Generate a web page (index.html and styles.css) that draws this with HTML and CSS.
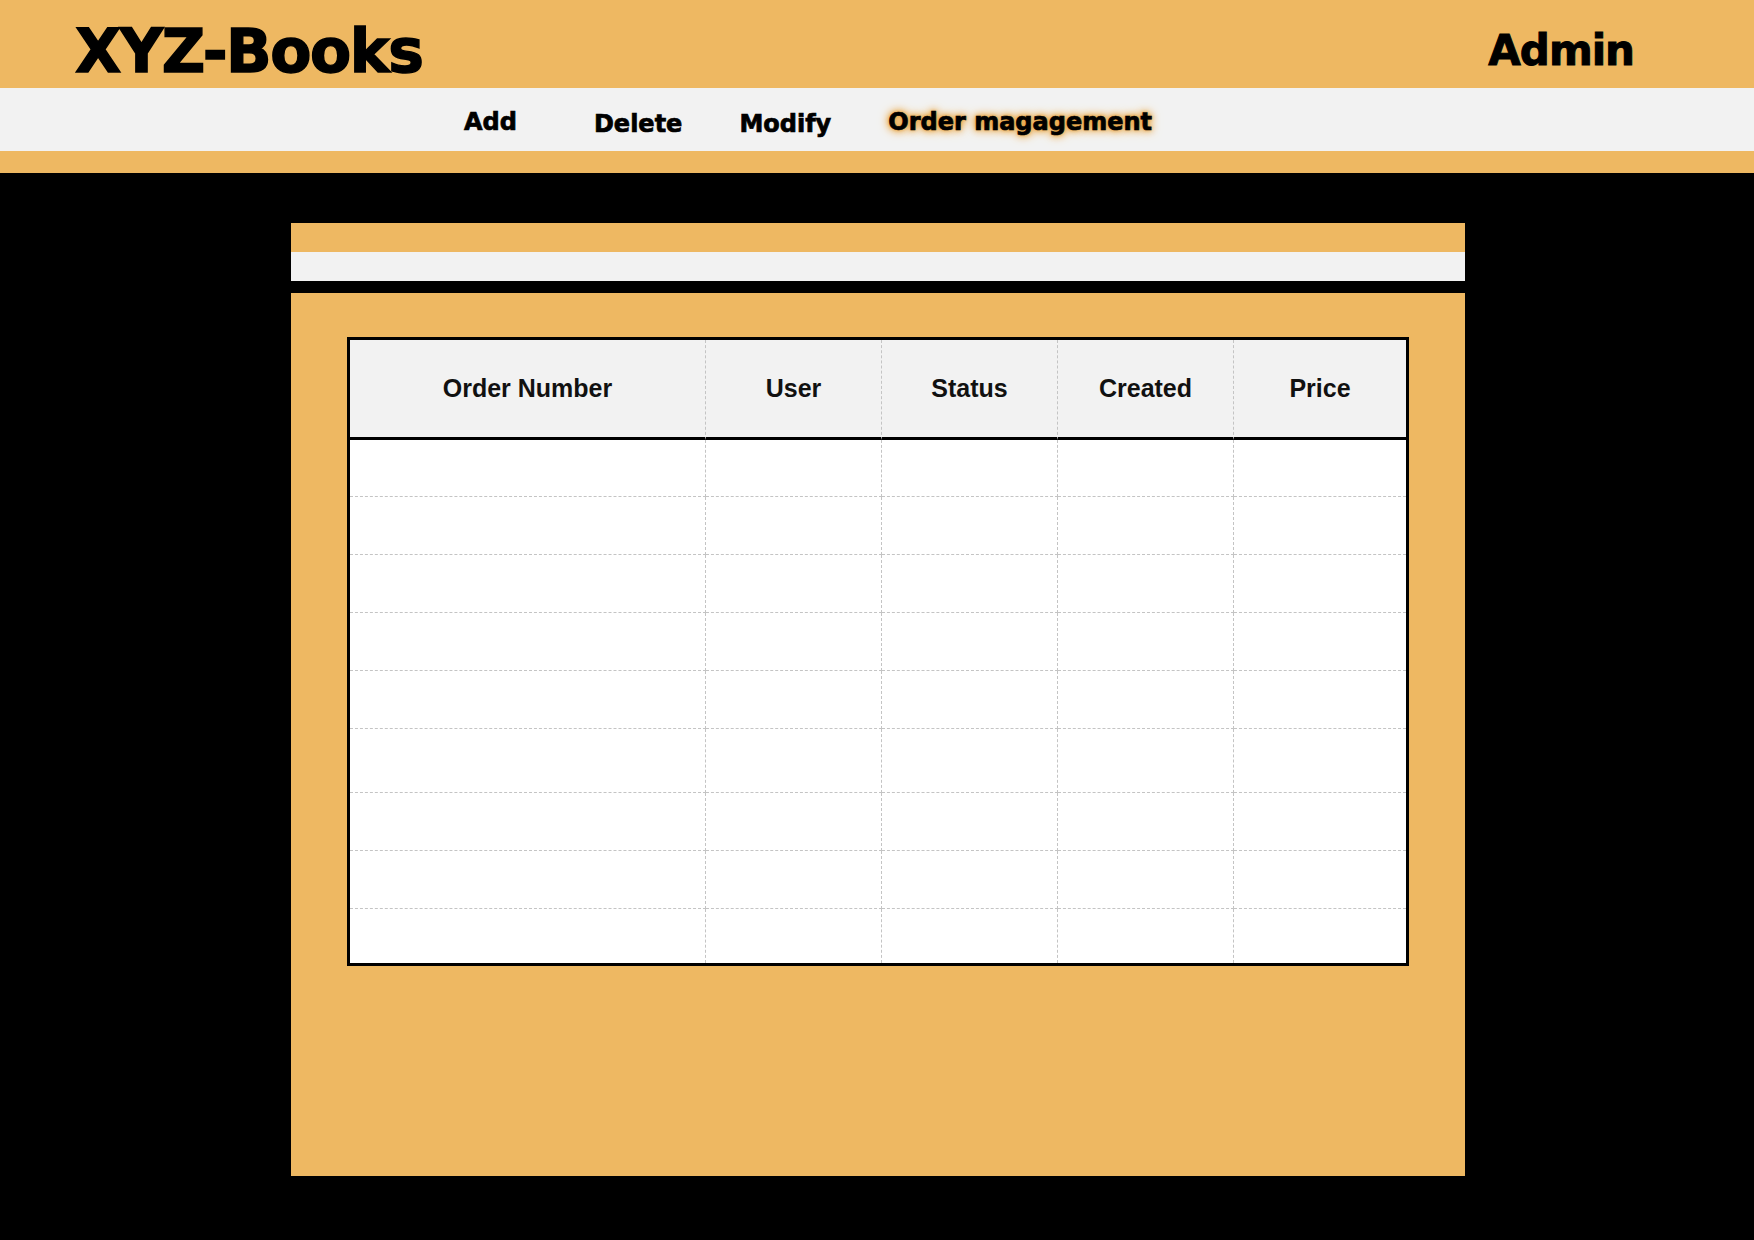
FILE: index.html
```html
<!DOCTYPE html>
<html lang="en">
<head>
<meta charset="utf-8">
<title>XYZ-Books Admin</title>
<link rel="stylesheet" href="styles.css">
</head>
<body>
<header class="topbar">
  <div class="brand-row">
    <h1 class="logo">XYZ-Books</h1>
    <div class="user">Admin</div>
  </div>
  <nav class="nav">
    <a class="nav-item nav-add" href="#">Add</a>
    <a class="nav-item nav-low" href="#">Delete</a>
    <a class="nav-item nav-low" href="#">Modify</a>
    <a class="nav-item nav-active" href="#">Order magagement</a>
  </nav>
  <div class="topbar-foot"></div>
</header>
<main class="main">
  <div class="strip strip-orange"></div>
  <div class="strip strip-gray"></div>
  <section class="panel">
    <table class="orders">
      <colgroup>
        <col class="c-num">
        <col class="c-mid">
        <col class="c-mid">
        <col class="c-mid">
        <col class="c-last">
      </colgroup>
      <thead>
        <tr><th>Order Number</th><th>User</th><th>Status</th><th>Created</th><th>Price</th></tr>
      </thead>
      <tbody>
        <tr class="row-first"><td></td><td></td><td></td><td></td><td></td></tr>
        <tr><td></td><td></td><td></td><td></td><td></td></tr>
        <tr><td></td><td></td><td></td><td></td><td></td></tr>
        <tr><td></td><td></td><td></td><td></td><td></td></tr>
        <tr><td></td><td></td><td></td><td></td><td></td></tr>
        <tr class="row-tall"><td></td><td></td><td></td><td></td><td></td></tr>
        <tr><td></td><td></td><td></td><td></td><td></td></tr>
        <tr><td></td><td></td><td></td><td></td><td></td></tr>
        <tr class="row-last"><td></td><td></td><td></td><td></td><td></td></tr>
      </tbody>
    </table>
  </section>
</main>
</body>
</html>
```
FILE: styles.css
```css
* { box-sizing: border-box; }

html, body {
  margin: 0;
  padding: 0;
}

body {
  background: #000;
  width: 1754px;
  height: 1240px;
  overflow: hidden;
  font-family: "DejaVu Sans", "Liberation Sans", sans-serif;
}

.brand-row {
  height: 88px;
  background: #eeb862;
  display: flex;
  justify-content: space-between;
  align-items: flex-start;
  padding: 0 120px 0 75px;
}

.logo {
  margin: 21px 0 0;
  font: 700 60px/60px "DejaVu Sans", sans-serif;
  letter-spacing: -1.5px;
  color: #000;
  -webkit-text-stroke: 1.4px #000;
}

.user {
  margin-top: 30px;
  font: 700 42px/42px "DejaVu Sans", sans-serif;
  letter-spacing: -1px;
  color: #000;
  -webkit-text-stroke: 1px #000;
}

.nav {
  height: 63px;
  background: #f2f2f2;
  display: flex;
  align-items: flex-start;
  gap: 57px;
  padding: 22px 0 0 464px;
}

.nav-item {
  font: 700 24px/24px "DejaVu Sans", sans-serif;
  color: #000;
  text-decoration: none;
  -webkit-text-stroke: 0.7px #000;
}

.nav-add { margin-right: 20px; }
.nav-low { padding-top: 2px; }

.nav-active {
  text-shadow: 0 0 3px #e39a35, 0 0 6px #e8a545, 0 0 9px #eeb258, 0 0 12px #f2bd6c;
}

.topbar-foot {
  height: 22px;
  background: #eeb862;
}

.main {
  width: 1174px;
  margin: 50px 0 0 291px;
}

.strip { height: 29px; }
.strip-orange { background: #eeb862; }
.strip-gray { background: #f2f2f2; }

.panel {
  margin-top: 12px;
  height: 883px;
  background: #eeb862;
  padding: 44px 56px;
}

.orders {
  width: 1062px;
  table-layout: fixed;
  border-collapse: separate;
  border-spacing: 0;
  border: 3px solid #000;
  background: #fff;
}

.c-num { width: 356px; }
.c-mid { width: 176px; }
.c-last { width: 172px; }

.orders th {
  height: 100px;
  padding: 0;
  background: #f2f2f2;
  border-bottom: 3px solid #000;
  border-right: 1px dashed #c4c4c4;
  font: 700 25px "Liberation Sans", Arial, sans-serif;
  color: #111;
  text-align: center;
  vertical-align: middle;
}

.orders td {
  height: 58px;
  padding: 0;
  border-right: 1px dashed #c4c4c4;
  border-bottom: 1px dashed #c4c4c4;
}

.orders th:last-child,
.orders td:last-child { border-right: none; }

.orders .row-first td { height: 57px; }
.orders .row-tall td { height: 64px; }
.orders .row-last td { height: 54px; border-bottom: none; }
```
